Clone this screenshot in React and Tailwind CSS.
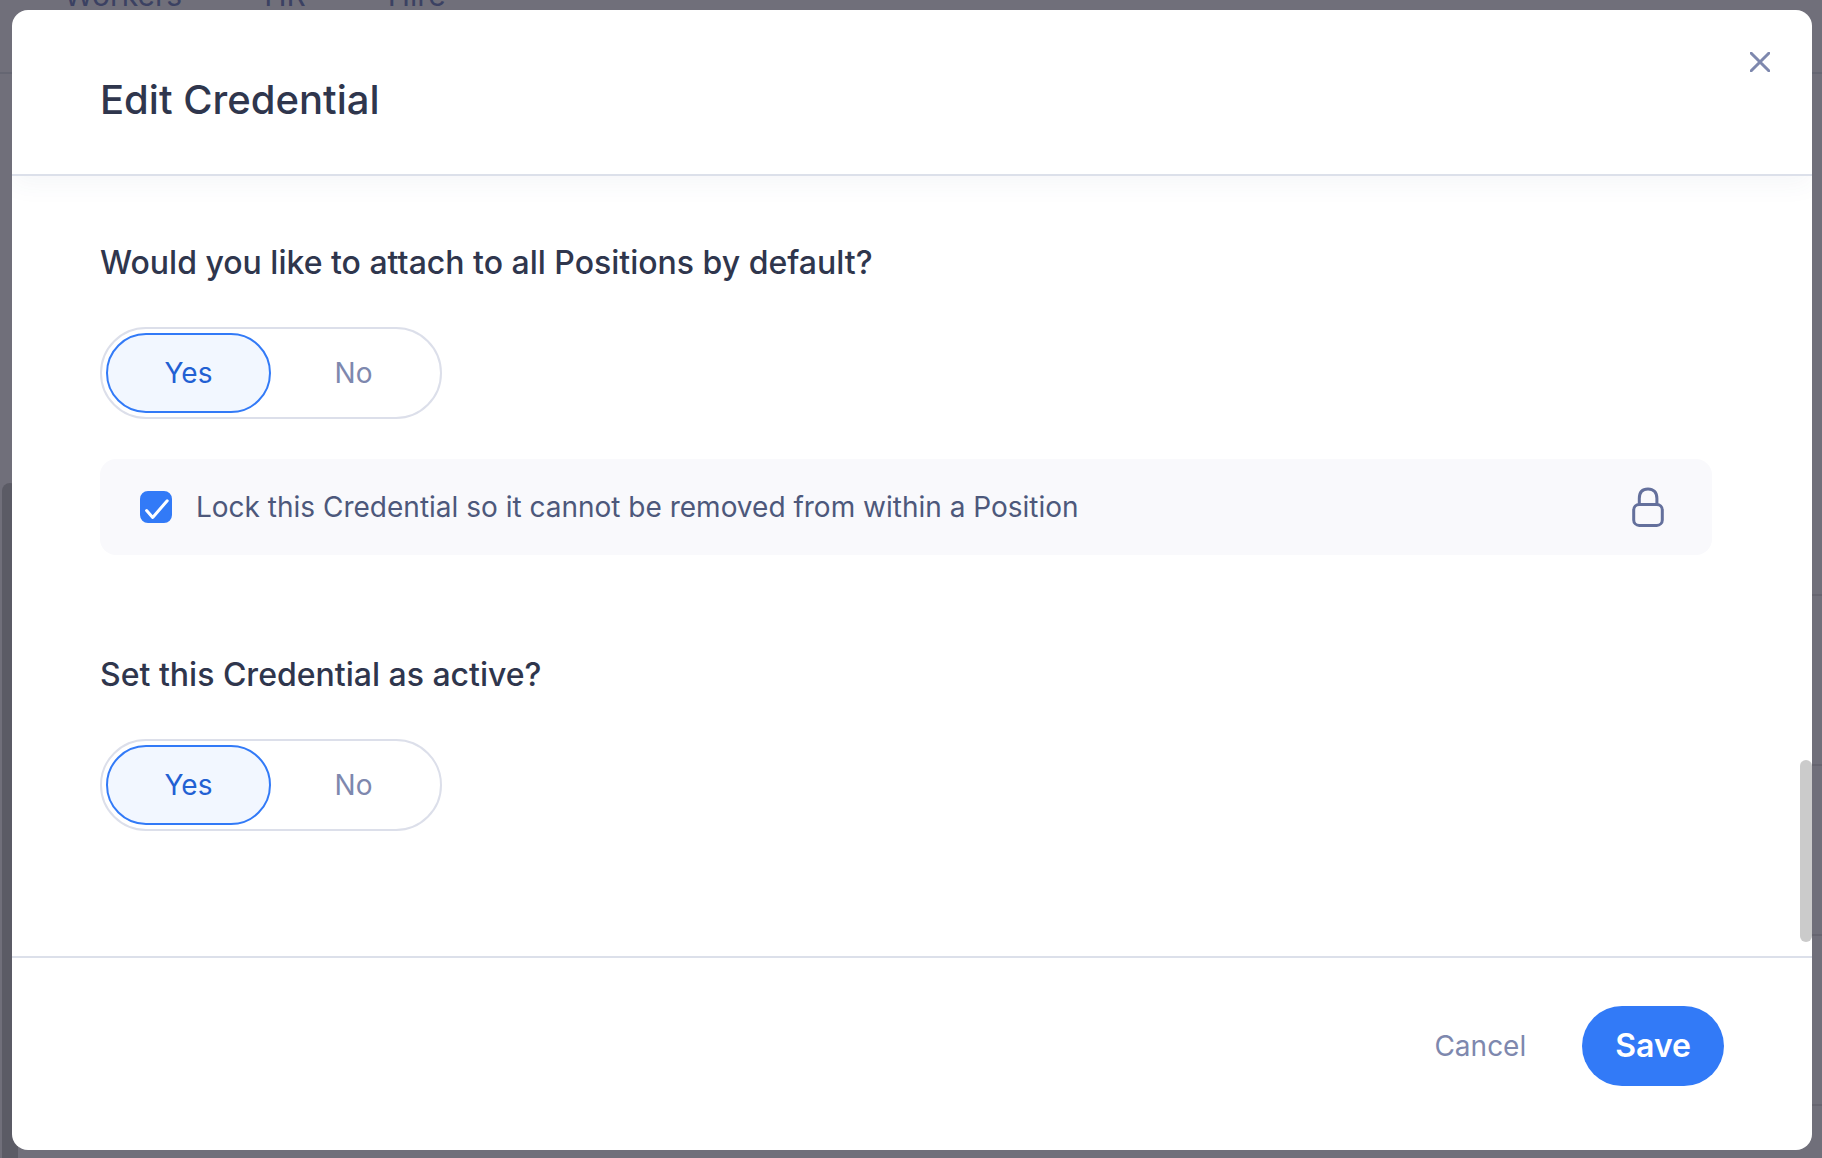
import { useState } from "react";

function PageBehind() {
  return (
    <div
      aria-hidden="true"
      className="absolute inset-0 flex flex-col overflow-hidden bg-[#706f7a] text-[30px] leading-8 text-[#3b4162]"
    >
      <div className="flex h-[74px] shrink-0 items-start gap-[82px] border-b-2 border-[#656672] pl-16">
        <span className="-mt-[21px]">Workers</span>
        <span className="-mt-[21px]">HR</span>
        <span className="-mt-[21px]">Hire</span>
      </div>
      <div className="flex min-h-0 grow justify-between">
        <div className="mt-[409px] ml-[2px] w-4 rounded-t-full bg-[#5b5b65]" />
        <div className="flex w-10 flex-col">
          <div className="h-[522px] shrink-0 border-b-2 border-[#666570]" />
          <div className="h-[170px] shrink-0 border-b-2 border-[#666570]" />
          <div className="h-[170px] shrink-0 border-b-2 border-[#666570]" />
          <div className="h-[170px] shrink-0 border-b-2 border-[#666570]" />
        </div>
      </div>
    </div>
  );
}

function CloseIcon() {
  return (
    <svg viewBox="0 0 20 20" className="size-5" fill="none" stroke="currentColor" strokeWidth="3" strokeLinecap="round" aria-hidden="true">
      <path d="M1.2 1.2 18.8 18.8M18.8 1.2 1.2 18.8" />
    </svg>
  );
}

function LockIcon() {
  return (
    <svg viewBox="0 0 32 40" className="h-10 w-8 text-[#64709c]" fill="none" stroke="currentColor" strokeWidth="3" aria-hidden="true">
      <rect x="1.7" y="17.5" width="28.6" height="20.9" rx="5.5" />
      <path d="M7.3 17.5V11.5C7.3 5.2 10.6 1.9 16 1.9S24.9 5.2 24.9 11.5V17.5" />
    </svg>
  );
}

function YesNo({ name, legend, value, onChange }) {
  return (
    <fieldset>
      <legend className="text-[32px] leading-[46px] font-medium text-[#2f364d]">{legend}</legend>
      <div className="mt-[41px] flex w-fit rounded-full border-2 border-[#dcdfea] p-1">
        {["Yes", "No"].map((option) => (
          <label key={option} className="relative cursor-pointer">
            <input
              type="radio"
              name={name}
              value={option}
              checked={value === option}
              onChange={() => onChange(option)}
              className="peer sr-only"
            />
            <span className="flex h-20 w-[165px] items-center justify-center rounded-full border-2 border-transparent text-[28px] leading-10 text-[#7e88ae] peer-checked:border-[#327af7] peer-checked:bg-[#f2f7ff] peer-checked:text-[#2260d3]">
              {option}
            </span>
          </label>
        ))}
      </div>
    </fieldset>
  );
}

export default function App() {
  const [attach, setAttach] = useState("Yes");
  const [active, setActive] = useState("Yes");
  const [locked, setLocked] = useState(true);

  return (
    <div className="relative h-screen overflow-hidden font-['Inter',sans-serif]">
      <PageBehind />
      <div className="relative flex h-full pt-2.5 pr-2.5 pb-2 pl-3">
        <div role="dialog" aria-modal="true" aria-labelledby="dialog-title" className="flex grow flex-col overflow-hidden rounded-2xl bg-white">
          <header className="relative flex items-start justify-between border-b-2 border-[#dce0ea] pt-8 pr-8 pb-12 pl-[88px] shadow-[0_8px_24px_rgba(60,75,120,0.05)]">
            <h1 id="dialog-title" className="mt-8 text-[40px] leading-[52px] font-medium text-[#2f364d]">
              Edit Credential
            </h1>
            <button type="button" aria-label="Close" className="flex size-10 items-center justify-center text-[#7e88ae]">
              <CloseIcon />
            </button>
          </header>

          <main className="relative min-h-0 grow overflow-hidden pt-16 pr-[100px] pl-[88px]">
            <YesNo name="attach" legend="Would you like to attach to all Positions by default?" value={attach} onChange={setAttach} />

            <div className="mt-10 mb-[97px] flex h-24 items-center justify-between rounded-2xl bg-[#f9f9fc] pr-12 pl-10">
              <label className="flex cursor-pointer items-center gap-6 text-[28px] leading-10 text-[#4d587b]">
                <span className="grid size-8 shrink-0">
                  <input
                    type="checkbox"
                    checked={locked}
                    onChange={(e) => setLocked(e.target.checked)}
                    className="peer col-start-1 row-start-1 size-8 appearance-none rounded-lg border-2 border-[#c5cadb] checked:border-[#327af7] checked:bg-[#327af7]"
                  />
                  <svg viewBox="0 0 32 32" className="pointer-events-none invisible col-start-1 row-start-1 size-8 peer-checked:visible" fill="none" stroke="#fff" strokeWidth="3" strokeLinecap="round" strokeLinejoin="round" aria-hidden="true">
                    <path d="M6.6 19.6 12.7 26.4 27.2 9.8" />
                  </svg>
                </span>
                Lock this Credential so it cannot be removed from within a Position
              </label>
              <LockIcon />
            </div>

            <YesNo name="active" legend="Set this Credential as active?" value={active} onChange={setActive} />

            <div aria-hidden="true" className="absolute right-0 bottom-3.5 h-[182px] w-3 rounded-full bg-[#cbcbcb]" />
          </main>

          <footer className="flex items-center justify-end gap-14 border-t-2 border-[#dce0ea] pt-12 pr-[88px] pb-16">
            <button type="button" className="text-[28px] leading-10 text-[#7e88ae]">Cancel</button>
            <button type="button" className="h-20 rounded-full bg-[#327af7] px-[33px] text-[32px] leading-10 font-semibold text-white">
              Save
            </button>
          </footer>
        </div>
      </div>
    </div>
  );
}
